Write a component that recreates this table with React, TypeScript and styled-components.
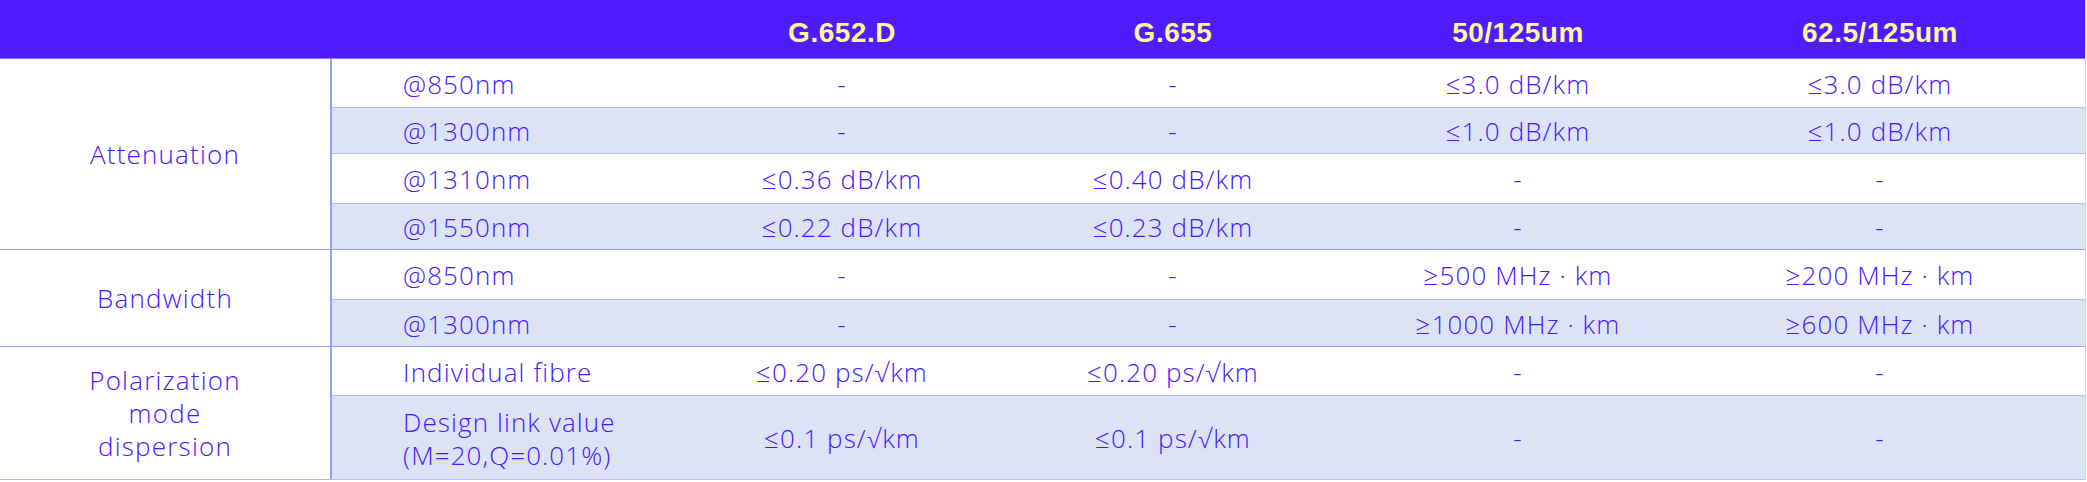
import React from 'react';
import styled, { createGlobalStyle } from 'styled-components';

const GlobalStyle = createGlobalStyle`
  html, body {
    margin: 0;
    padding: 0;
    background: #ffffff;
  }
`;

const colors = {
  head: '#4f1cff',
  headText: '#fff79c',
  text: '#4716ff',
  shade: '#dce3f5',
  line: '#b2c0f1',
  groupLine: '#8ea2ee',
};

const COLS = '367px 286px 376px 314px 1fr';

interface Row {
  label: React.ReactNode;
  vals: string[];
  h: number;
}

interface Group {
  label: string;
  rows: Row[];
}

const groups: Group[] = [
  {
    label: 'Attenuation',
    rows: [
      { label: '@850nm', vals: ['-', '-', '≤3.0 dB/km', '≤3.0 dB/km'], h: 48 },
      { label: '@1300nm', vals: ['-', '-', '≤1.0 dB/km', '≤1.0 dB/km'], h: 46 },
      { label: '@1310nm', vals: ['≤0.36 dB/km', '≤0.40 dB/km', '-', '-'], h: 50 },
      { label: '@1550nm', vals: ['≤0.22 dB/km', '≤0.23 dB/km', '-', '-'], h: 46 },
    ],
  },
  {
    label: 'Bandwidth',
    rows: [
      { label: '@850nm', vals: ['-', '-', '≥500 MHz · km', '≥200 MHz · km'], h: 49 },
      { label: '@1300nm', vals: ['-', '-', '≥1000 MHz · km', '≥600 MHz · km'], h: 47 },
    ],
  },
  {
    label: 'Polarization mode dispersion',
    rows: [
      { label: 'Individual fibre', vals: ['≤0.20 ps/√km', '≤0.20 ps/√km', '-', '-'], h: 48 },
      {
        label: (
          <>
            Design link value
            <br />
            (M=20,Q=0.01%)
          </>
        ),
        vals: ['≤0.1 ps/√km', '≤0.1 ps/√km', '-', '-'],
        h: 84,
      },
    ],
  },
];

const Table = styled.div`
  width: 2086px;
  border-right: 1px solid #c9d3f4;
  box-sizing: border-box;
  font-family: 'Open Sans', 'DejaVu Sans', sans-serif;
  font-weight: 300;
  color: ${colors.text};
`;

const HeadRow = styled.div`
  display: grid;
  grid-template-columns: 332px ${COLS};
  height: 59px;
  box-sizing: border-box;
  padding-top: 7px;
  background: ${colors.head};
  border-bottom: 1px solid #8a74ff;
  align-items: center;
`;

const HeadCell = styled.div`
  text-align: center;
  font-family: 'Liberation Sans', Arial, sans-serif;
  font-weight: 700;
  font-size: 28px;
  letter-spacing: 0.5px;
  color: ${colors.headText};
`;

const GroupBlock = styled.div`
  display: flex;
  border-bottom: 1px solid ${colors.groupLine};
  &:last-child {
    border-bottom-color: ${colors.line};
  }
`;

const GroupLabel = styled.div`
  flex: 0 0 330px;
  border-right: 2px solid ${colors.groupLine};
  display: flex;
  align-items: center;
  justify-content: center;
  text-align: center;
  font-size: 26px;
  line-height: 33px;
  letter-spacing: 1.2px;
  span {
    max-width: 190px;
  }
`;

const SubRows = styled.div`
  flex: 1;
  display: flex;
  flex-direction: column;
`;

const SubRow = styled.div<{ $shade: boolean; $h: number }>`
  display: grid;
  grid-template-columns: ${COLS};
  align-items: center;
  height: ${({ $h }) => $h}px;
  box-sizing: border-box;
  padding-top: 2px;
  background: ${({ $shade }) => ($shade ? colors.shade : '#ffffff')};
  border-top: 1px solid ${colors.line};
  &:first-child {
    border-top: none;
  }
  font-size: 26px;
  line-height: 33px;
  letter-spacing: 1.1px;
`;

const SubLabel = styled.div`
  padding-left: 71px;
  white-space: nowrap;
`;

const Value = styled.div`
  text-align: center;
  white-space: nowrap;
`;

const headers = ['G.652.D', 'G.655', '50/125um', '62.5/125um'];

export default function App() {
  return (
    <>
      <GlobalStyle />
      <Table>
        <HeadRow>
          <div />
          <div />
          {headers.map((h) => (
            <HeadCell key={h}>{h}</HeadCell>
          ))}
        </HeadRow>
        {groups.map((g) => (
          <GroupBlock key={g.label}>
            <GroupLabel>
              <span>{g.label}</span>
            </GroupLabel>
            <SubRows>
              {g.rows.map((r, i) => (
                <SubRow key={i} $shade={i % 2 === 1} $h={r.h}>
                  <SubLabel>{r.label}</SubLabel>
                  {r.vals.map((v, j) => (
                    <Value key={j}>{v}</Value>
                  ))}
                </SubRow>
              ))}
            </SubRows>
          </GroupBlock>
        ))}
      </Table>
    </>
  );
}
